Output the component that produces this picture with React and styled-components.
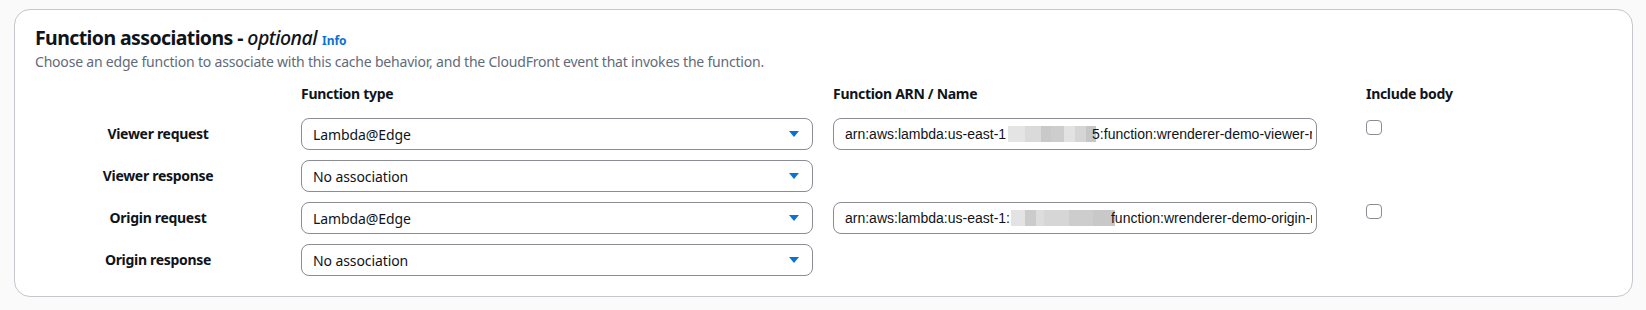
import React from "react";
import styled, { createGlobalStyle } from "styled-components";

const GlobalStyle = createGlobalStyle`
    body {
        margin: 0;
        background: #fafafa;
        font-family: "Noto Sans", "Open Sans", sans-serif;
        color: #0f141a;
    }
`;

const Page = styled.div`
    padding: 9px 13px 13px 14px;
`;

const Card = styled.section`
    background: #ffffff;
    border: 1px solid #c6c6cd;
    border-radius: 16px;
    padding: 16px 20px 20px 20px;
`;

const Title = styled.h2`
    margin: 0;
    font-size: 19.5px;
    line-height: 24px;
    font-weight: 700;
    letter-spacing: -0.6px;

    em {
        font-weight: 500;
        font-style: italic;
        letter-spacing: -0.5px;
    }
`;

const InfoLink = styled.a`
    margin-left: 5px;
    font-size: 12px;
    font-weight: 700;
    letter-spacing: 0;
    color: #0972d3;
    text-decoration: none;
`;

const Description = styled.p`
    margin: -1px 0 0;
    font-size: 14px;
    line-height: 20px;
    letter-spacing: -0.2px;
    color: #5f6b7a;
`;

const Grid = styled.div`
    display: grid;
    grid-template-columns: 246px 512px 513px auto;
    column-gap: 20px;
    row-gap: 10px;
    margin-top: 12px;
    align-items: center;
`;

const ColumnHeader = styled.div`
    font-size: 14px;
    line-height: 20px;
    font-weight: 700;
    letter-spacing: -0.3px;
    padding-bottom: 4px;
`;

const RowLabel = styled.div`
    font-size: 14px;
    line-height: 20px;
    font-weight: 700;
    letter-spacing: -0.3px;
    text-align: center;
`;

const Select = styled.div`
    box-sizing: border-box;
    width: 100%;
    height: 32px;
    display: flex;
    align-items: center;
    justify-content: space-between;
    border: 1px solid #8c8c94;
    border-radius: 8px;
    padding: 0 13px 0 11px;
    font-size: 14px;
    letter-spacing: -0.1px;
    color: #0f141a;
`;

const InputBox = styled.div`
    box-sizing: border-box;
    width: 484px;
    height: 32px;
    display: flex;
    align-items: center;
    border: 1px solid #8c8c94;
    border-radius: 8px;
    padding: 0 4px 0 11px;
`;

const InputText = styled.div`
    overflow: hidden;
    white-space: nowrap;
    font-family: "Liberation Sans", Arial, sans-serif;
    font-size: 14px;
    color: #0f141a;
`;

const Redacted = styled.span`
    display: inline-block;
    vertical-align: middle;
    width: ${(p) => p.w}px;
    height: 18px;
    margin: -4px ${(p) => p.mr || 0}px 0 ${(p) => p.ml || 0}px;
    background: ${(p) => p.bg};
`;

const CheckCell = styled.div`
    align-self: start;
    padding-top: 2px;
`;

const Checkbox = styled.span`
    display: block;
    box-sizing: border-box;
    width: 16px;
    height: 15px;
    border: 1px solid #8c8c94;
    border-radius: 4px;
    background: #fff;
`;

const mosaicA = `linear-gradient(90deg,
    #e4e4e4 0 17px, #dadada 17px 33px, #c9c9c9 33px 43px, #cdcdcd 43px 56px,
    #e2e2e2 56px 67px, #d5d5d5 67px 78px, #c6c6c6 78px 88px)`;

const mosaicB = `linear-gradient(90deg,
    #e3e3e3 0 14px, #cbcbcb 14px 25px, #dddddd 25px 33px, #d6d6d6 33px 58px,
    #cdcdcd 58px 82px, #c8c8c8 82px 104px)`;

const Caret = () => (
    <svg width="10" height="6" viewBox="0 0 10 6">
        <polygon points="0,0 10,0 5,6" fill="#0972d3" />
    </svg>
);

const rows = [
    {
        label: "Viewer request",
        type: "Lambda@Edge",
        arn: (
            <>
                arn:aws:lambda:us-east-1
                <Redacted w={88} ml={2} mr={-4} bg={mosaicA} />
                5:function:wrenderer-demo-viewer-request
            </>
        ),
    },
    { label: "Viewer response", type: "No association" },
    {
        label: "Origin request",
        type: "Lambda@Edge",
        arn: (
            <>
                arn:aws:lambda:us-east-1:
                <Redacted w={104} ml={1} mr={-4} bg={mosaicB} />
                function:wrenderer-demo-origin-request
            </>
        ),
    },
    { label: "Origin response", type: "No association" },
];

export default function App() {
    return (
        <Page>
            <GlobalStyle />
            <Card>
                <Title>
                    Function associations - <em>optional</em>
                    <InfoLink href="#">Info</InfoLink>
                </Title>
                <Description>
                    Choose an edge function to associate with this cache behavior, and the
                    CloudFront event that invokes the function.
                </Description>
                <Grid>
                    <div />
                    <ColumnHeader>Function type</ColumnHeader>
                    <ColumnHeader>Function ARN / Name</ColumnHeader>
                    <ColumnHeader>Include body</ColumnHeader>
                    {rows.map((r) => (
                        <React.Fragment key={r.label}>
                            <RowLabel>{r.label}</RowLabel>
                            <Select>
                                <span>{r.type}</span>
                                <Caret />
                            </Select>
                            {r.arn ? (
                                <InputBox>
                                    <InputText>{r.arn}</InputText>
                                </InputBox>
                            ) : (
                                <div />
                            )}
                            {r.arn ? (
                                <CheckCell>
                                    <Checkbox />
                                </CheckCell>
                            ) : (
                                <div />
                            )}
                        </React.Fragment>
                    ))}
                </Grid>
            </Card>
        </Page>
    );
}
